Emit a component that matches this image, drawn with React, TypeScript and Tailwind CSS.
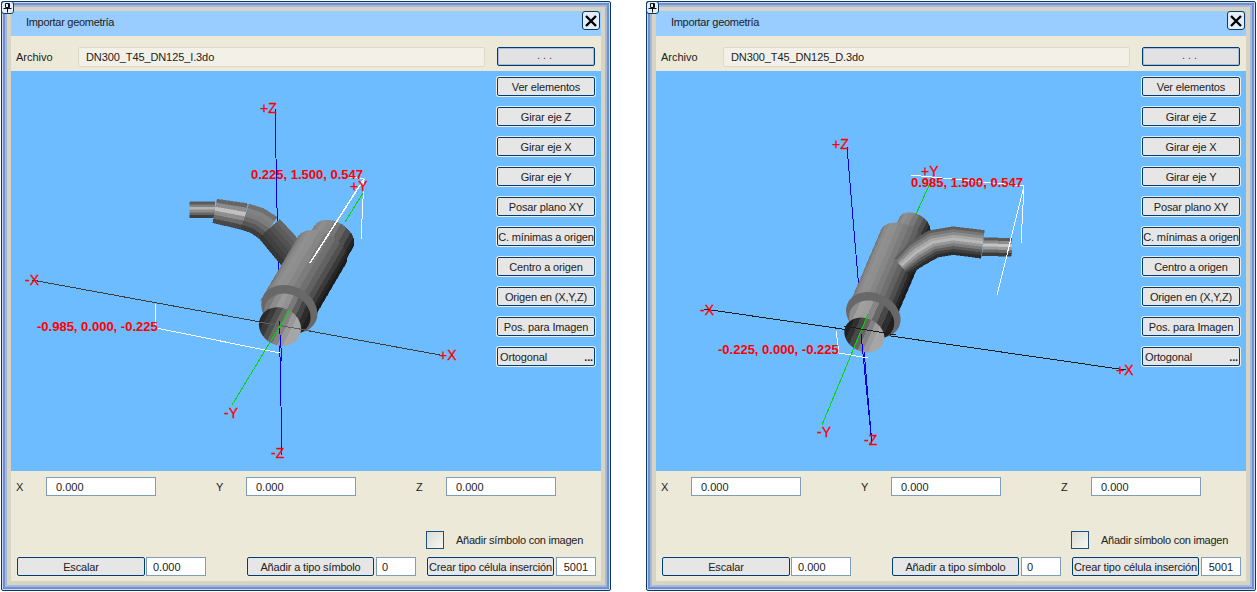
import type { ReactNode } from "react";

const sideButtons = [
  "Ver elementos",
  "Girar eje Z",
  "Girar eje X",
  "Girar eje Y",
  "Posar plano XY",
  "C. mínimas a origen",
  "Centro a origen",
  "Origen en (X,Y,Z)",
  "Pos. para Imagen",
];

type Pt = [number, number];
type TubePt = [number, number, number];

const bodyRamp = ["#707070", "#7e7e7e", "#8a8a8a", "#909090", "#8e8e8e", "#868686", "#7c7c7c", "#707070", "#626262", "#505050", "#3a3a3a", "#262626", "#1c1c1c", "#1c1c1c"];
const stubRamp = ["#747474", "#868686", "#8e8e8e", "#888888", "#787878", "#646464", "#4e4e4e", "#343434", "#222222", "#1c1c1c"];

// tubo curvo: bandas a lo largo de una línea central
function tube(pts: TubePt[], colors: string[]) {
  const normals = pts.map((_, i) => {
    const a = pts[Math.max(i - 1, 0)];
    const b = pts[Math.min(i + 1, pts.length - 1)];
    const dx = b[0] - a[0];
    const dy = b[1] - a[1];
    const l = Math.hypot(dx, dy);
    return [-dy / l, dx / l];
  });
  const at = (i: number, s: number) => `${pts[i][0] + normals[i][0] * pts[i][2] * s},${pts[i][1] + normals[i][1] * pts[i][2] * s}`;
  return colors.map((c, k) => {
    const s0 = -1 + (2 * k) / colors.length;
    const s1 = -1 + (2 * (k + 1)) / colors.length;
    const fwd = pts.map((_, i) => at(i, s0));
    const back = pts.map((_, i) => at(i, s1)).reverse();
    return <polygon key={k} points={[...fwd, ...back].join(" ")} fill={c} stroke={c} strokeWidth="1.5" />;
  });
}

// cilindro recto visto desde el extremo cercano p0
function cyl(p0: Pt, p1: Pt, r: number, e: number, colors: string[]) {
  const l = Math.hypot(p1[0] - p0[0], p1[1] - p0[1]);
  const a = [(p1[0] - p0[0]) / l, (p1[1] - p0[1]) / l];
  const n = [-a[1], a[0]];
  const pt = (p: Pt, t: number) => `${p[0] + n[0] * r * Math.sin(t) + a[0] * e * Math.cos(t)},${p[1] + n[1] * r * Math.sin(t) + a[1] * e * Math.cos(t)}`;
  return colors.map((c, k) => {
    const t0 = -Math.PI / 2 + (Math.PI * k) / colors.length;
    const t1 = -Math.PI / 2 + (Math.PI * (k + 1)) / colors.length;
    const steps = [0, 0.25, 0.5, 0.75, 1].map((f) => t0 + (t1 - t0) * f);
    const top = steps.map((t) => pt(p1, t));
    const bottom = steps.map((t) => pt(p0, t)).reverse();
    return <polygon key={k} points={[...top, ...bottom].join(" ")} fill={c} stroke={c} strokeWidth="1.5" />;
  });
}

function disc(id: string, c: Pt, r: number, e: number, angle: number, colors: string[]) {
  const w = (2 * r) / colors.length;
  return (
    <g transform={`translate(${c[0]} ${c[1]}) rotate(${angle})`}>
      <clipPath id={id}>
        <ellipse rx={r} ry={e} />
      </clipPath>
      <g clipPath={`url(#${id})`}>
        {colors.map((col, i) => (
          <rect key={i} x={-r + i * w} y={-e} width={w + 1} height={2 * e} fill={col} />
        ))}
      </g>
    </g>
  );
}

function Value({ x, y, t }: { x: number; y: number; t: string }) {
  return (
    <text x={x} y={y} fill="#ff0000" fontSize={13} fontWeight="700" fontFamily="Liberation Sans, sans-serif">
      {t}
    </text>
  );
}

function Axis({ x, y, t }: { x: number; y: number; t: string }) {
  return (
    <text x={x} y={y} fill="#ff0000" fontSize={14} fontWeight="400" stroke="#ff0000" strokeWidth="0.3" fontFamily="Liberation Sans, sans-serif">
      {t}
    </text>
  );
}

function SceneLeft() {
  return (
    <svg width="590" height="400" viewBox="0 0 590 400" className="block" shapeRendering="crispEdges">
      <line x1="21" y1="209" x2="429" y2="284" stroke="#3c3c3c" />
      <g transform="translate(159 89) scale(0.3333)">
        {tube([[60, 150, 24], [135, 150, 24]], ["#5a5a5a", "#808080", "#b4b4b4", "#8c8c8c", "#666666", "#3e3e3e"])}
        {tube([[135, 153, 36], [225, 170, 40]], ["#666666", "#8c8c8c", "#c0c0c0", "#8e8e8e", "#6c6c6c", "#484848"])}
        {tube([[225, 170, 40], [262, 182, 41], [298, 206, 42]], ["#707070", "#828282", "#7c7c7c", "#6a6a6a", "#565656", "#3e3e3e"])}
      </g>
      <line x1="264" y1="37" x2="271" y2="384" stroke="#0000e0" />
      <g transform="translate(159 89) scale(0.3333)">
        {tube([[298, 206, 42], [335, 248, 44], [372, 292, 44]], ["#666666", "#5c5c5c", "#525252", "#484848", "#404040", "#363636"])}
        {cyl([440, 320], [490, 232], 66, 46, stubRamp)}
        {cyl([342, 465], [455, 272], 82, 52, bodyRamp)}
        {disc("left-collar", [358, 447], 88, 68, 26, ["#686868"])}
        {disc("left-inner", [352, 463], 72, 60, 26, ["#7a7a7a", "#8c8c8c", "#9a9a9a", "#929292", "#7a7a7a", "#5e5e5e", "#444444", "#2c2c2c", "#202020"])}
        {disc("left-mouth", [330, 500], 65, 56, 26, ["#2a2a2a", "#3a3a3a", "#505050", "#6a6a6a", "#828282", "#989898", "#a6a6a6", "#a6a6a6"])}
      </g>
      {/* ejes sobre la pieza */}
      <line x1="268" y1="250" x2="271" y2="290" stroke="#0000e0" />
      <line x1="248" y1="251" x2="300" y2="260" stroke="#606060" />
      <line x1="278" y1="240" x2="221" y2="334" stroke="#00d800" />
      <line x1="352" y1="122" x2="334" y2="151" stroke="#00d800" />
      <line x1="299" y1="192" x2="353" y2="108" stroke="#ffffff" strokeWidth="1.5" />
      <line x1="353" y1="108" x2="350" y2="168" stroke="#ffffff" />
      <line x1="353" y1="108" x2="338" y2="106" stroke="#ffffff" />
      <line x1="144" y1="233" x2="145" y2="257" stroke="#ffffff" />
      <line x1="145" y1="257" x2="269" y2="282" stroke="#ffffff" />
      <Value x={240} y={108} t="0.225, 1.500, 0.547" />
      <Axis x={339} y={120} t="+Y" />
      <Axis x={249} y={42} t="+Z" />
      <Axis x={14} y={214} t="-X" />
      <Axis x={428} y={289} t="+X" />
      <Axis x={213} y={347} t="-Y" />
      <Axis x={260} y={387} t="-Z" />
      <Value x={26} y={260} t="-0.985, 0.000, -0.225" />
    </svg>
  );
}

function SceneRight() {
  return (
    <svg width="590" height="400" viewBox="0 0 590 400" className="block" shapeRendering="crispEdges">
      <line x1="48" y1="238" x2="470" y2="299" stroke="#1c1c1c" />
      <line x1="191" y1="76" x2="216" y2="374" stroke="#0000e0" />
      <g transform="translate(164 79) scale(0.3333)">
        {cyl([250, 290], [283, 226], 50, 34, stubRamp)}
        {cyl([146, 512], [250, 268], 72, 44, bodyRamp)}
        {tube([[488, 290, 27], [575, 292, 27]], ["#5a5a5a", "#8c8c8c", "#c4c4c4", "#9c9c9c", "#6a6a6a", "#3c3c3c"])}
        {tube([[245, 350, 32], [290, 312, 40], [340, 282, 42], [400, 272, 42], [488, 283, 42]], ["#5e5e5e", "#767676", "#8c8c8c", "#a8a8a8", "#b8b8b8", "#989898", "#7c7c7c", "#5c5c5c", "#404040", "#2c2c2c"])}
        {disc("right-collar", [160, 495], 85, 65, 24, ["#686868"])}
        {disc("right-inner", [155, 510], 70, 56, 24, ["#8e8e8e", "#a0a0a0", "#9c9c9c", "#868686", "#666666", "#484848", "#2e2e2e", "#202020"])}
        {disc("right-mouth", [133, 555], 62, 50, 24, ["#202020", "#303030", "#484848", "#646464", "#828282", "#9a9a9a", "#a6a6a6", "#a6a6a6"])}
      </g>
      <line x1="212" y1="243" x2="166" y2="354" stroke="#00d800" />
      <line x1="260" y1="143" x2="276" y2="108" stroke="#00d800" />
      <line x1="205" y1="263" x2="216" y2="374" stroke="#0000e0" />
      <line x1="188" y1="255" x2="240" y2="264" stroke="#1c1c1c" />
      <line x1="368" y1="115" x2="341" y2="224" stroke="#ffffff" />
      <line x1="368" y1="115" x2="365" y2="172" stroke="#ffffff" />
      <line x1="368" y1="115" x2="255" y2="104" stroke="#ffffff" />
      <line x1="180" y1="260" x2="183" y2="282" stroke="#ffffff" />
      <line x1="183" y1="282" x2="212" y2="287" stroke="#ffffff" />
      <Value x={255} y={116} t="0.985, 1.500, 0.547" />
      <Axis x={265} y={105} t="+Y" />
      <Axis x={176} y={78} t="+Z" />
      <Axis x={44} y={244} t="-X" />
      <Axis x={460} y={304} t="+X" />
      <Axis x={161} y={366} t="-Y" />
      <Axis x={208} y={374} t="-Z" />
      <Value x={62} y={283} t="-0.225, 0.000, -0.225" />
    </svg>
  );
}

function Btn({ label, className }: { label: string; className: string }) {
  return (
    <button className={"flex h-[19px] items-center justify-center whitespace-nowrap rounded-[2px] border border-[#003c74] bg-[#e6e6e6] pt-px text-[11px] leading-none tracking-[-0.15px] text-[#222] shadow-[0_0_0_1px_#f0ede0] " + className}>
      {label}
    </button>
  );
}

function Field({ value, className }: { value: string; className: string }) {
  return (
    <div className={"flex h-[19px] items-center border border-[#7f9db9] bg-white pt-px text-[11px] text-[#222] " + className}>
      {value}
    </div>
  );
}

function Dialog({ file, scene }: { file: string; scene: ReactNode }) {
  return (
    <div className="relative h-[590px] w-[610px] shrink-0 rounded-[2px] border border-[#0a3a6a] bg-[#c8d8f0] p-px font-['Liberation_Sans',sans-serif]">
      {/* chincheta */}
      <div className="absolute left-[-1px] top-[-1px] z-10 flex h-[13px] w-[13px] items-center justify-center rounded-[3px] border border-[#0a3a6a] bg-[#e4eefa]">
        <svg width="9" height="10" viewBox="0 0 9 10" fill="none" stroke="#111">
          <path d="M2.5 .5h4v4h-4zM.5 5.5h8M4.5 5.5v4M5.5 1v3" />
        </svg>
      </div>
      <div className="h-full border-[2px] border-[#6f8fd0]">
        <div className="h-full border-[2px] border-[#a8b8d8]">
          <div className="h-full border-[4px] border-[#d8d4c4]">
            <div className="flex h-full flex-col bg-[#ece9d8]">
              <div className="relative flex h-[25px] shrink-0 items-center bg-[#99ccff] pb-[2px] pl-[15px] text-[11px] tracking-[-0.3px] text-[#222]">
                Importar geometría
                <div className="absolute right-px top-0 flex h-[19px] w-[18px] items-center justify-center rounded-[3px] border border-[#0a3a6a] bg-[#e4eefa]">
                  <svg width="12" height="12" viewBox="0 0 12 12" stroke="#000" strokeWidth="2.4">
                    <path d="M1 1l10 10M11 1L1 11" />
                  </svg>
                </div>
              </div>
              <div className="flex h-[35px] shrink-0 items-start pt-[11px] text-[11px] text-[#222]">
                <span className="ml-[5px] flex h-[20px] w-[62px] items-center">Archivo</span>
                <div className="flex h-[20px] w-[407px] items-center rounded-[2px] border border-[#dcd9c8] bg-[#f3f1e7] pl-[7px] tracking-[-0.1px]">{file}</div>
                <button className="ml-[12px] flex h-[19px] w-[98px] items-center justify-center rounded-[2px] border border-[#003c74] bg-[#e2e2e2] pb-[2px] text-[11px] leading-none tracking-[3px] text-[#603060] shadow-[inset_0_0_0_1px_#a8bce0]">...</button>
              </div>
              <div className="relative h-[400px] shrink-0 bg-[#6cbcff]">
                {scene}
                <div className="absolute left-[486px] top-[6px] flex w-[98px] flex-col gap-[11px]">
                  {sideButtons.map((b) => (
                    <Btn key={b} label={b} className="w-full" />
                  ))}
                  <button className="flex h-[19px] w-full items-center justify-between rounded-[2px] border border-[#003c74] bg-[#e6e6e6] pl-[2px] pr-[1px] pt-px text-[11px] leading-none tracking-[-0.15px] text-[#222] shadow-[0_0_0_1px_#f0ede0]">
                    Ortogonal
                    <span className="font-bold leading-none">...</span>
                  </button>
                </div>
              </div>
              <div className="flex min-h-0 grow flex-col text-[11px] text-[#222]">
                <div className="mt-[6px] flex items-center">
                  <span className="ml-[5px] w-[30px] pt-px">X</span>
                  <Field value="0.000" className="w-[110px] pl-[9px]" />
                  <span className="ml-[60px] w-[30px] pt-px">Y</span>
                  <Field value="0.000" className="w-[110px] pl-[9px]" />
                  <span className="ml-[60px] w-[30px] pt-px">Z</span>
                  <Field value="0.000" className="w-[110px] pl-[9px]" />
                </div>
                <div className="mt-[34px] flex h-[20px] items-center">
                  <div className="ml-[415px] h-[18px] w-[18px] border border-[#1c4f7c] bg-gradient-to-br from-[#dcdcd6] to-[#f6f6f2]" />
                  <span className="ml-[12px] pt-px tracking-[-0.25px]">Añadir símbolo con imagen</span>
                </div>
                <div className="mt-[7px] flex items-center">
                  <Btn label="Escalar" className="ml-[6px] w-[128px]" />
                  <Field value="0.000" className="ml-px w-[60px] pl-[6px]" />
                  <Btn label="Añadir a tipo símbolo" className="ml-[41px] w-[127px]" />
                  <Field value="0" className="ml-[2px] w-[40px] pl-[5px]" />
                  <Btn label="Crear tipo célula inserción" className="ml-[11px] w-[127px]" />
                  <Field value="5001" className="ml-[2px] w-[40px] justify-center" />
                </div>
              </div>
            </div>
          </div>
        </div>
      </div>
    </div>
  );
}

export default function App() {
  return (
    <div className="flex h-[592px] w-[1257px] gap-[35px] overflow-hidden bg-white pl-px pt-px">
      <Dialog file="DN300_T45_DN125_I.3do" scene={<SceneLeft />} />
      <Dialog file="DN300_T45_DN125_D.3do" scene={<SceneRight />} />
    </div>
  );
}
